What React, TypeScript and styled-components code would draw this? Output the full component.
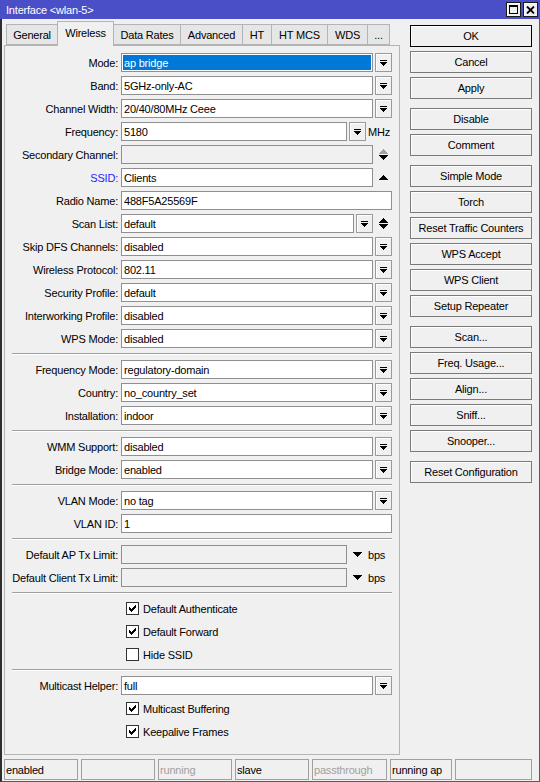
import React from 'react'
import styled, { createGlobalStyle } from 'styled-components'

const GlobalStyle = createGlobalStyle`
    html, body {
        margin: 0;
        padding: 0;
        background: #f0f0f0;
    }
    body {
        font-family: 'Liberation Sans', Arial, sans-serif;
        font-size: 11px;
        letter-spacing: -0.2px;
        color: #000;
    }
    * {
        box-sizing: border-box;
    }
    svg {
        display: block;
    }
`

const Window = styled.div`
    width: 540px;
    height: 782px;
    display: flex;
    flex-direction: column;
    background: #f0f0f0;
    overflow: hidden;
`

const TitleBar = styled.div`
    flex: none;
    height: 19px;
    display: flex;
    align-items: center;
    gap: 2px;
    padding: 0 2px 0 6px;
    background: #4b4fc7;
    color: #fff;
`

const Title = styled.div`
    flex: 1;
`

const TitleButton = styled.div`
    width: 15px;
    height: 15px;
    display: flex;
    align-items: center;
    justify-content: center;
    border: 1px solid #1a1a1a;
    background: #f0f0f0;
    box-shadow: inset 1px 1px 0 #fff;
`

const Frame = styled.div`
    flex: 1;
    min-height: 0;
    display: flex;
    flex-direction: column;
    border-left: 2px solid #2e2e2e;
    border-right: 1px solid #5a5a5a;
    border-bottom: 1px solid #5a5a5a;
`

const Main = styled.div`
    flex: 1;
    min-height: 0;
    display: flex;
    padding: 2px 0 0 2px;
`

const LeftColumn = styled.div`
    width: 396px;
    display: flex;
    flex-direction: column;
`

const TabStrip = styled.div`
    position: relative;
    z-index: 1;
    height: 24px;
    flex: none;
    display: flex;
    align-items: flex-end;
    padding-left: 2px;
`

const Tab = styled.div<{ $active?: boolean; $w: number }>`
    width: ${p => p.$w}px;
    height: ${p => (p.$active ? 25 : 21)}px;
    margin-bottom: ${p => (p.$active ? -1 : 0)}px;
    padding-bottom: ${p => (p.$active ? 3 : 0)}px;
    display: flex;
    align-items: center;
    justify-content: center;
    border: 1px solid #b4b4b4;
    border-bottom: ${p => (p.$active ? 'none' : '1px solid #b4b4b4')};
    background: ${p => (p.$active ? '#f0f0f0' : '#e6e6e6')};
    white-space: nowrap;

    & + & {
        margin-left: -1px;
    }
`

const Panel = styled.div`
    flex: 1;
    display: flex;
    flex-direction: column;
    gap: 4px;
    padding: 7px 7px 0 0;
    border: 1px solid #b4b4b4;
`

const Separator = styled.div`
    height: 2px;
    margin: 1px 0 1px 7px;
    border-top: 1px solid #a0a0a0;
    border-bottom: 1px solid #fff;
`

const Row = styled.div`
    height: 19px;
    display: flex;
    align-items: center;
`

const Label = styled.div<{ $accent?: boolean }>`
    width: 113px;
    margin-right: 3px;
    text-align: right;
    white-space: nowrap;
    color: ${p => (p.$accent ? '#1f1fff' : '#000')};
`

const Field = styled.div<{ $selected?: boolean; $disabled?: boolean }>`
    flex: 1;
    height: 19px;
    display: flex;
    align-items: center;
    padding: 0 2px;
    border: 1px solid #8f8f8f;
    background: ${p => (p.$selected ? '#0078d7' : p.$disabled ? '#f0f0f0' : '#fff')};
    color: ${p => (p.$selected ? '#fff' : '#000')};
    box-shadow: ${p => (p.$selected ? 'inset 0 0 0 1px #fff' : 'none')};
    white-space: nowrap;
    overflow: hidden;
`

const DropButton = styled.div`
    flex: none;
    width: 17px;
    height: 19px;
    margin-left: 2px;
    display: flex;
    align-items: center;
    justify-content: center;
    border: 1px solid #9a9a9a;
    background: #f0f0f0;
    box-shadow: inset 1px 1px 0 #fff;
`

const ArrowSlot = styled.div`
    flex: none;
    width: 17px;
    height: 19px;
    margin-left: 2px;
    display: flex;
    flex-direction: column;
    align-items: center;
    justify-content: center;
    gap: 1px;
`

const Unit = styled.div`
    flex: none;
    width: 26px;
    padding-left: 2px;
    white-space: nowrap;
`

const CheckRow = styled.div`
    height: 19px;
    display: flex;
    align-items: center;
    padding-left: 121px;
`

const Box = styled.div`
    width: 13px;
    height: 13px;
    display: flex;
    align-items: center;
    justify-content: center;
    border: 1px solid #333;
    background: #fff;
`

const CheckText = styled.span`
    margin-left: 4px;
`

const Actions = styled.div`
    width: 122px;
    margin-left: 10px;
    padding-top: 4px;
    display: flex;
    flex-direction: column;
    gap: 9px;
`

const ActionGroup = styled.div`
    display: flex;
    flex-direction: column;
    gap: 4px;
`

const ActionButton = styled.div<{ $default?: boolean }>`
    height: 22px;
    display: flex;
    align-items: center;
    justify-content: center;
    border: 1px solid ${p => (p.$default ? '#000' : '#7a7a7a')};
    background: #f0f0f0;
    box-shadow: inset 1px 1px 0 #fff;
    white-space: nowrap;
`

const StatusBar = styled.div`
    flex: none;
    height: 26px;
    display: flex;
    gap: 3px;
    padding: 4px 0 1px 2px;
`

const StatusCell = styled.div<{ $w: number; $muted?: boolean }>`
    width: ${p => p.$w}px;
    display: flex;
    align-items: center;
    padding-left: 1px;
    border: 1px solid #a0a0a0;
    color: ${p => (p.$muted ? '#a0a0a0' : '#000')};
    white-space: nowrap;
`

// pixel icons built from 1px runs [x, y, length] so they stay crisp
type Run = [number, number, number]

const Pixels = ({ runs, w, h, color = '#000' }: { runs: Run[]; w: number; h: number; color?: string }) => (
    <svg width={w} height={h} shapeRendering='crispEdges'>
        {runs.map(([x, y, len], i) => (
            <rect key={i} x={x} y={y} width={len} height={1} fill={color} />
        ))}
    </svg>
)

const DROP_RUNS: Run[] = [
    [0, 0, 7],
    [0, 2, 7],
    [1, 3, 5],
    [2, 4, 3],
    [3, 5, 1]
]

const UP_RUNS: Run[] = [
    [4, 0, 1],
    [3, 1, 3],
    [2, 2, 5],
    [1, 3, 7],
    [0, 4, 9]
]

const DOWN_RUNS: Run[] = UP_RUNS.map(([x, y, len]) => [x, 4 - y, len] as Run)

const CHECK_RUNS: Run[] = [
    [6, 0, 1],
    [5, 1, 2],
    [0, 2, 1],
    [4, 2, 3],
    [0, 3, 2],
    [3, 3, 3],
    [0, 4, 5],
    [1, 5, 3],
    [2, 6, 1]
]

const DropIcon = () => <Pixels w={7} h={6} runs={DROP_RUNS} />

const Arrow = ({ dir, color }: { dir: 'up' | 'down'; color?: string }) => (
    <Pixels w={9} h={5} color={color} runs={dir === 'up' ? UP_RUNS : DOWN_RUNS} />
)

const CheckMark = () => <Pixels w={7} h={7} runs={CHECK_RUNS} />

const MaxIcon = () => (
    <svg width={9} height={9} shapeRendering='crispEdges'>
        <rect x={0} y={0} width={9} height={2} fill='#000' />
        <rect x={0} y={0} width={1} height={9} fill='#000' />
        <rect x={8} y={0} width={1} height={9} fill='#000' />
        <rect x={0} y={8} width={9} height={1} fill='#000' />
    </svg>
)

const CloseIcon = () => (
    <svg width={9} height={8} viewBox='0 0 9 8'>
        <path d='M1 0.5 L8 7.5 M8 0.5 L1 7.5' stroke='#000' strokeWidth={1.8} />
    </svg>
)

const SelectRow = ({ label, value, selected }: { label: string; value: string; selected?: boolean }) => (
    <Row>
        <Label>{label}:</Label>
        <Field $selected={selected}>{value}</Field>
        <DropButton>
            <DropIcon />
        </DropButton>
    </Row>
)

const TextRow = ({ label, value }: { label: string; value: string }) => (
    <Row>
        <Label>{label}:</Label>
        <Field>{value}</Field>
    </Row>
)

const LimitRow = ({ label }: { label: string }) => (
    <Row>
        <Label>{label}:</Label>
        <Field $disabled />
        <ArrowSlot>
            <Arrow dir='down' />
        </ArrowSlot>
        <Unit>bps</Unit>
    </Row>
)

const CheckItem = ({ label, checked }: { label: string; checked?: boolean }) => (
    <CheckRow>
        <Box>{checked && <CheckMark />}</Box>
        <CheckText>{label}</CheckText>
    </CheckRow>
)

const tabs = [
    { name: 'General', w: 52 },
    { name: 'Wireless', w: 57, active: true },
    { name: 'Data Rates', w: 68 },
    { name: 'Advanced', w: 63 },
    { name: 'HT', w: 30 },
    { name: 'HT MCS', w: 57 },
    { name: 'WDS', w: 41 },
    { name: '...', w: 23 }
]

const actionGroups = [
    ['OK', 'Cancel', 'Apply'],
    ['Disable', 'Comment'],
    ['Simple Mode', 'Torch', 'Reset Traffic Counters', 'WPS Accept', 'WPS Client', 'Setup Repeater'],
    ['Scan...', 'Freq. Usage...', 'Align...', 'Sniff...', 'Snooper...'],
    ['Reset Configuration']
]

const statusCells = [
    { text: 'enabled', w: 74 },
    { text: '', w: 74 },
    { text: 'running', w: 74, muted: true },
    { text: 'slave', w: 74 },
    { text: 'passthrough', w: 75, muted: true },
    { text: 'running ap', w: 62 },
    { text: '', w: 77 }
]

const App = () => (
    <>
        <GlobalStyle />
        <Window>
            <TitleBar>
                <Title>Interface &lt;wlan-5&gt;</Title>
                <TitleButton>
                    <MaxIcon />
                </TitleButton>
                <TitleButton>
                    <CloseIcon />
                </TitleButton>
            </TitleBar>
            <Frame>
                <Main>
                    <LeftColumn>
                        <TabStrip>
                            {tabs.map(t => (
                                <Tab key={t.name} $w={t.w} $active={t.active}>
                                    {t.name}
                                </Tab>
                            ))}
                        </TabStrip>
                        <Panel>
                            <SelectRow label='Mode' value='ap bridge' selected />
                            <SelectRow label='Band' value='5GHz-only-AC' />
                            <SelectRow label='Channel Width' value='20/40/80MHz Ceee' />
                            <Row>
                                <Label>Frequency:</Label>
                                <Field>5180</Field>
                                <DropButton>
                                    <DropIcon />
                                </DropButton>
                                <Unit>MHz</Unit>
                            </Row>
                            <Row>
                                <Label>Secondary Channel:</Label>
                                <Field $disabled />
                                <ArrowSlot>
                                    <Arrow dir='up' color='#a0a0a0' />
                                    <Arrow dir='down' />
                                </ArrowSlot>
                            </Row>
                            <Row>
                                <Label $accent>SSID:</Label>
                                <Field>Clients</Field>
                                <ArrowSlot>
                                    <Arrow dir='up' />
                                </ArrowSlot>
                            </Row>
                            <TextRow label='Radio Name' value='488F5A25569F' />
                            <Row>
                                <Label>Scan List:</Label>
                                <Field>default</Field>
                                <DropButton>
                                    <DropIcon />
                                </DropButton>
                                <ArrowSlot>
                                    <Arrow dir='up' />
                                    <Arrow dir='down' />
                                </ArrowSlot>
                            </Row>
                            <SelectRow label='Skip DFS Channels' value='disabled' />
                            <SelectRow label='Wireless Protocol' value='802.11' />
                            <SelectRow label='Security Profile' value='default' />
                            <SelectRow label='Interworking Profile' value='disabled' />
                            <SelectRow label='WPS Mode' value='disabled' />
                            <Separator />
                            <SelectRow label='Frequency Mode' value='regulatory-domain' />
                            <SelectRow label='Country' value='no_country_set' />
                            <SelectRow label='Installation' value='indoor' />
                            <Separator />
                            <SelectRow label='WMM Support' value='disabled' />
                            <SelectRow label='Bridge Mode' value='enabled' />
                            <Separator />
                            <SelectRow label='VLAN Mode' value='no tag' />
                            <TextRow label='VLAN ID' value='1' />
                            <Separator />
                            <LimitRow label='Default AP Tx Limit' />
                            <LimitRow label='Default Client Tx Limit' />
                            <Separator />
                            <CheckItem label='Default Authenticate' checked />
                            <CheckItem label='Default Forward' checked />
                            <CheckItem label='Hide SSID' />
                            <Separator />
                            <SelectRow label='Multicast Helper' value='full' />
                            <CheckItem label='Multicast Buffering' checked />
                            <CheckItem label='Keepalive Frames' checked />
                        </Panel>
                    </LeftColumn>
                    <Actions>
                        {actionGroups.map((group, gi) => (
                            <ActionGroup key={gi}>
                                {group.map(name => (
                                    <ActionButton key={name} $default={name === 'OK'}>
                                        {name}
                                    </ActionButton>
                                ))}
                            </ActionGroup>
                        ))}
                    </Actions>
                </Main>
                <StatusBar>
                    {statusCells.map((c, i) => (
                        <StatusCell key={i} $w={c.w} $muted={c.muted}>
                            {c.text}
                        </StatusCell>
                    ))}
                </StatusBar>
            </Frame>
        </Window>
    </>
)

export default App
